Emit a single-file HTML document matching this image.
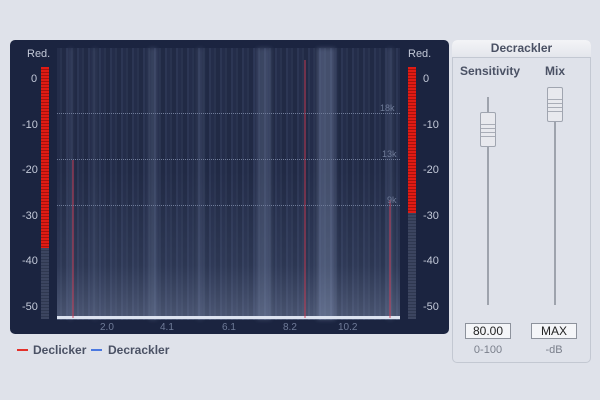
<!DOCTYPE html><html><head><style>
body{margin:0;width:600px;height:400px;background:#dfe2ea;font-family:"Liberation Sans",sans-serif;position:relative;overflow:hidden}
.a{position:absolute}
.dark{left:10px;top:40px;width:439px;height:294px;background:#1b2440;border-radius:5px}
.lab{color:#c3c9d8;font-size:11px}
.spec{left:57px;top:48px;width:343px;height:272px;background:
linear-gradient(to bottom,rgba(0,0,0,0) 0,rgba(0,0,0,0) 45%,rgba(130,150,185,.12) 80%,rgba(170,185,215,.3) 100%),
repeating-linear-gradient(90deg,#242d4a 0 3px,#29334f 3px 5px,#212a45 5px 9px,#2c3654 9px 11px);}
.bands{left:57px;top:48px;width:343px;height:272px;filter:blur(2px);background:
linear-gradient(90deg,transparent 0 12px,rgba(120,135,170,.25) 12px 15px,transparent 15px 36px,rgba(120,135,170,.18) 36px 40px,transparent 40px 92px,rgba(140,155,190,.22) 92px 100px,transparent 100px 140px,rgba(120,135,170,.2) 140px 146px,transparent 146px 200px,rgba(140,155,190,.25) 200px 214px,transparent 214px 260px,rgba(150,165,200,.3) 260px 278px,transparent 278px 330px,rgba(120,135,170,.2) 330px 336px,transparent 336px)}
.grid{left:57px;width:343px;border-top:1px dotted #6f7b98}
.tick{color:#6f7b98;font-size:9px}
.mtr{width:8px;background:repeating-linear-gradient(#2f3850 0 1px,#3c4560 1px 3px)}
.red{width:8px;background:repeating-linear-gradient(#e01b14 0 2px,#a5120d 2px 3px)}
.rl{width:2px;background:rgba(210,60,85,.45)}
.panel{left:452px;top:40px;width:137px;height:321px;border:1px solid #c3c8d2;border-radius:5px;background:#dfe2ea}
.hdr{left:452px;top:40px;width:139px;height:17px;background:linear-gradient(#f3f4f7,#e4e6ec);border-bottom:1px solid #c3c8d2;border-radius:5px 5px 0 0;text-align:center;font-weight:bold;font-size:12px;line-height:17px;color:#4a5164}
.t{font-weight:bold;font-size:12px;color:#4a5164}
.trk{width:2px;background:#9ea3ad}
.hdl{width:16px;height:35px;border:1px solid #a0a5b0;border-radius:2px;background:linear-gradient(#e8e9ee 0 8px,transparent 8px 27px,#e8e9ee 27px),repeating-linear-gradient(#e8e9ee 0 3px,#a9adb7 3px 4px);box-sizing:border-box}
.box{height:16px;border:1px solid #8d929c;background:#f4f5f8;font-size:12px;text-align:center;line-height:15px;color:#222;box-sizing:border-box}
.sub{font-size:11px;color:#7a7f8b;text-align:center}
</style></head><body>
<div class="a dark"></div>
<div class="a spec"></div>
<div class="a bands"></div>
<div class="a" style="left:57px;top:316px;width:343px;height:3px;background:#dde3f0"></div>
<div class="a rl" style="left:72px;top:160px;height:158px"></div>
<div class="a rl" style="left:304px;top:60px;height:258px"></div>
<div class="a rl" style="left:389px;top:200px;height:118px"></div>
<div class="a grid" style="top:113px"></div><div class="a grid" style="top:159px"></div><div class="a grid" style="top:205px"></div>
<div class="a tick" style="left:380px;top:103px">18k</div>
<div class="a tick" style="left:382px;top:149px">13k</div>
<div class="a tick" style="left:387px;top:195px">9k</div>
<div class="a tick" style="left:100px;top:322px;font-size:10px">2.0</div>
<div class="a tick" style="left:160px;top:322px;font-size:10px">4.1</div>
<div class="a tick" style="left:222px;top:322px;font-size:10px">6.1</div>
<div class="a tick" style="left:283px;top:322px;font-size:10px">8.2</div>
<div class="a tick" style="left:338px;top:322px;font-size:10px">10.2</div>
<div class="a lab" style="left:27px;top:48px">Red.</div>
<div class="a lab" style="left:408px;top:48px">Red.</div>
<div class="a mtr" style="left:41px;top:67px;height:252px"></div>
<div class="a red" style="left:41px;top:67px;height:181px"></div>
<div class="a mtr" style="left:408px;top:67px;height:252px"></div>
<div class="a red" style="left:408px;top:67px;height:146px"></div>
<div class="a lab" style="left:31px;top:73px">0</div>
<div class="a lab" style="left:22px;top:119px">-10</div>
<div class="a lab" style="left:22px;top:164px">-20</div>
<div class="a lab" style="left:22px;top:210px">-30</div>
<div class="a lab" style="left:22px;top:255px">-40</div>
<div class="a lab" style="left:22px;top:301px">-50</div>
<div class="a lab" style="left:423px;top:73px">0</div>
<div class="a lab" style="left:423px;top:119px">-10</div>
<div class="a lab" style="left:423px;top:164px">-20</div>
<div class="a lab" style="left:423px;top:210px">-30</div>
<div class="a lab" style="left:423px;top:255px">-40</div>
<div class="a lab" style="left:423px;top:301px">-50</div>
<div class="a" style="left:17px;top:349px;width:11px;height:2px;background:#e3302a"></div>
<div class="a t" style="left:33px;top:343px">Declicker</div>
<div class="a" style="left:91px;top:349px;width:11px;height:2px;background:#4a78e0"></div>
<div class="a t" style="left:108px;top:343px">Decrackler</div>
<div class="a panel"></div>
<div class="a hdr">Decrackler</div>
<div class="a t" style="left:460px;top:64px">Sensitivity</div>
<div class="a t" style="left:545px;top:64px">Mix</div>
<div class="a trk" style="left:487px;top:97px;height:208px"></div>
<div class="a trk" style="left:554px;top:110px;height:195px"></div>
<div class="a hdl" style="left:480px;top:112px"></div>
<div class="a hdl" style="left:547px;top:87px"></div>
<div class="a box" style="left:465px;top:323px;width:46px">80.00</div>
<div class="a box" style="left:531px;top:323px;width:46px">MAX</div>
<div class="a sub" style="left:465px;top:344px;width:46px">0-100</div>
<div class="a sub" style="left:531px;top:344px;width:46px">-dB</div>
</body></html>
